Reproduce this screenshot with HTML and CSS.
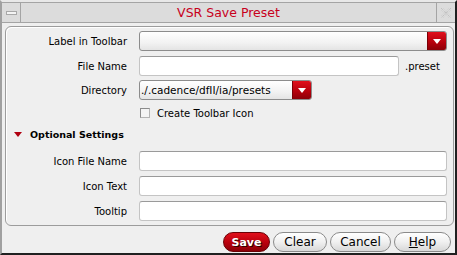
FILE: index.html
```html
<!DOCTYPE html>
<html lang="en">
<head>
    <meta charset="UTF-8">
    <title>VSR Save Preset</title>
    <link rel="stylesheet" href="styles.css">
</head>
<body>
    <div class="window">
        <div class="titlebar">
            <div class="tb-btn"><span class="min-bar"></span></div>
            <div class="title">VSR Save Preset</div>
            <div class="tb-btn close">
                <svg width="12" height="12" viewBox="0 0 12 12">
                    <path d="M1 1 L11 11 M11 1 L1 11" stroke="#b8b8b8" stroke-width="1" stroke-dasharray="1 1" fill="none"/>
                    <path d="M3 1 L11 9 M1 3 L9 11 M9 1 L1 9 M11 3 L3 11" stroke="#d0d0d0" stroke-width="1" stroke-dasharray="1 1" fill="none"/>
                </svg>
            </div>
        </div>

        <div class="content">
            <div class="group">
                <div class="form-row">
                    <label class="label">Label in Toolbar</label>
                    <div class="combo wide">
                        <span class="combo-text"></span>
                        <span class="drop"><svg width="8" height="5" viewBox="0 0 8 5"><path d="M0 0 H8 L4 5 Z" fill="#fff"/></svg></span>
                    </div>
                </div>
                <div class="form-row tight">
                    <label class="label">File Name</label>
                    <div class="input file"></div>
                    <span class="suffix">.preset</span>
                </div>
                <div class="form-row tight">
                    <label class="label">Directory</label>
                    <div class="combo dir">
                        <span class="combo-text">./.cadence/dfII/ia/presets</span>
                        <span class="drop"><svg width="8" height="5" viewBox="0 0 8 5"><path d="M0 0 H8 L4 5 Z" fill="#fff"/></svg></span>
                    </div>
                </div>
                <div class="check-row">
                    <span class="checkbox"></span>
                    <span>Create Toolbar Icon</span>
                </div>
                <div class="section">
                    <svg class="arrow" width="8" height="5" viewBox="0 0 8 5"><path d="M0 0 H8 L4 5 Z" fill="#b00010"/></svg>
                    <span>Optional Settings</span>
                </div>
                <div class="form-row">
                    <label class="label">Icon File Name</label>
                    <div class="input wide"></div>
                </div>
                <div class="form-row">
                    <label class="label">Icon Text</label>
                    <div class="input wide"></div>
                </div>
                <div class="form-row last">
                    <label class="label">Tooltip</label>
                    <div class="input wide"></div>
                </div>
            </div>

            <div class="buttons">
                <button class="btn save">Save</button>
                <button class="btn clear">Clear</button>
                <button class="btn cancel">Cancel</button>
                <button class="btn help"><u>H</u>elp</button>
            </div>
        </div>
    </div>
</body>
</html>
```

FILE: styles.css
```css
body {
    margin: 0;
    background: #efefef;
    font-family: "DejaVu Sans", sans-serif;
    font-size: 10px;
    color: #000;
}
.window {
    width: 457px;
    height: 255px;
    box-sizing: border-box;
    border-left: 2px solid #a0a0a0;
    border-right: 2px solid #202020;
    border-bottom: 2px solid #202020;
    border-top: 2px solid #e8e8e8;
    background: #efefef;
}
.titlebar {
    display: flex;
    height: 19px;
    border-top: 1px solid #a4a4a4;
    border-bottom: 1px solid #a4a4a4;
    background: #dcdcdc;
}
.tb-btn {
    width: 18px;
    display: flex;
    align-items: center;
    justify-content: center;
    border-right: 1px solid #a4a4a4;
}
.tb-btn.close {
    border-right: none;
    border-left: 1px solid #a4a4a4;
}
.min-bar {
    width: 9px;
    height: 2px;
    background: #f4f4f4;
    border: 1px solid #a8a8a8;
    margin-top: 1px;
}
.title {
    flex: 1;
    text-align: center;
    color: #c8001c;
    font-size: 12.5px;
    line-height: 19px;
}
.content {
    padding: 3px 1px 0 3px;
}
.group {
    border: 1px solid #9c9c9c;
    border-radius: 6px;
    box-shadow: inset 1px 1px 0 #ffffff;
    padding: 4px 5px 4px 0;
}
.form-row {
    display: flex;
    align-items: center;
    height: 20px;
    margin-bottom: 5px;
}
.form-row.tight {
    margin-bottom: 4px;
}
.form-row.last {
    margin-bottom: 0;
}
.label {
    width: 121px;
    margin-right: 12px;
    text-align: right;
}
.input {
    height: 20px;
    box-sizing: border-box;
    background: #fff;
    border: 1px solid #c4c4c4;
    border-top-color: #9a9a9a;
    border-radius: 3px;
}
.wide {
    width: 308px;
}
.input.file {
    width: 260px;
}
.suffix {
    margin-left: 6px;
}
.combo {
    height: 20px;
    box-sizing: border-box;
    display: flex;
    align-items: center;
    border: 1px solid #8c8c8c;
    border-radius: 3px;
    background: linear-gradient(#ffffff, #f2f2f2 60%, #e4e4e4);
    overflow: hidden;
}
.combo.dir {
    width: 173px;
}
.combo-text {
    flex: 1;
    padding-left: 1px;
    font-size: 10.5px;
    white-space: nowrap;
}
.drop {
    width: 18px;
    height: 100%;
    display: flex;
    align-items: center;
    justify-content: center;
    background: linear-gradient(#e0101c, #b4000c 60%, #8c0008);
    border-left: 1px solid #7a0006;
}
.check-row {
    display: flex;
    align-items: center;
    height: 18px;
    margin-left: 134px;
    margin-bottom: 3px;
}
.checkbox {
    width: 10px;
    height: 10px;
    box-sizing: border-box;
    border: 1px solid #b4b4b4;
    border-top-color: #8c8c8c;
    border-left-color: #8c8c8c;
    background: #f4f4f4;
    margin-right: 7px;
}
.section {
    display: flex;
    align-items: center;
    height: 18px;
    margin-bottom: 8px;
    padding-left: 8px;
    font-weight: bold;
    font-size: 9.5px;
}
.arrow {
    margin-right: 8px;
}
.buttons {
    display: flex;
    justify-content: flex-end;
    gap: 3px;
    margin-top: 6px;
    padding-right: 3px;
}
.btn {
    height: 20px;
    border: 1px solid #8a8a8a;
    border-radius: 10px;
    background: linear-gradient(#ffffff, #f0f0f0 50%, #d8d8d8);
    font-family: "DejaVu Sans", sans-serif;
    font-size: 12px;
    color: #000;
    padding: 0;
}
.btn.save {
    width: 47px;
    background: linear-gradient(#e0101c, #b8000c 55%, #8c0008);
    border-color: #6a0004;
    color: #fff;
    font-weight: bold;
    font-size: 11px;
    text-shadow: 1px 1px 0 #300000;
}
.btn.clear {
    width: 54px;
}
.btn.cancel {
    width: 61px;
}
.btn.help {
    width: 57px;
}
```
